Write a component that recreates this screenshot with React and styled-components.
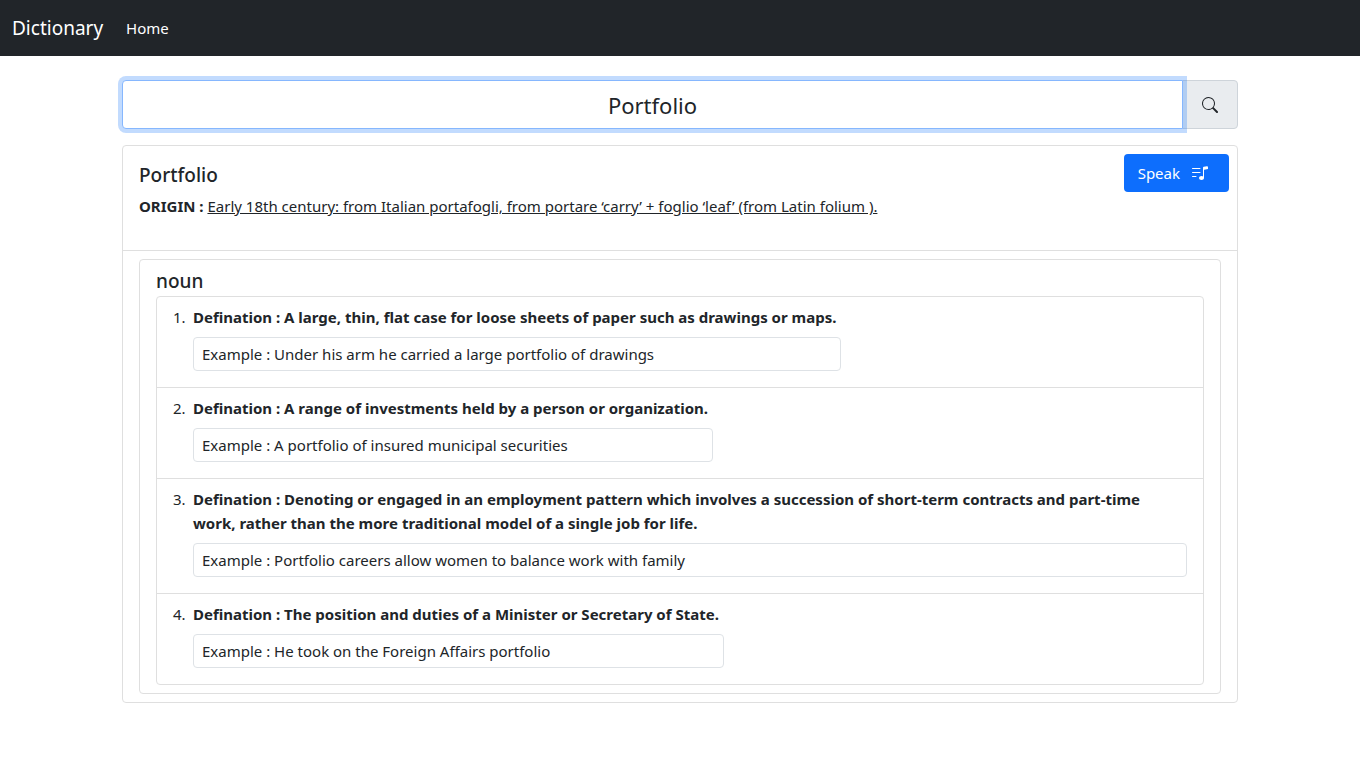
import React, { useState } from "react";
import styled, { createGlobalStyle } from "styled-components";
import { BsSearch, BsMusicNoteList } from "react-icons/bs";

const GlobalStyle = createGlobalStyle`
  *, *::before, *::after { box-sizing: border-box; }
  body {
    margin: 0;
    background: #fff;
    color: #212529;
    font-family: "Segoe UI", "Noto Sans", "Open Sans", sans-serif;
    font-size: 15px;
    line-height: 24px;
  }
`;

const Navbar = styled.nav`
  display: flex;
  align-items: center;
  gap: 23px;
  height: 56px;
  padding: 0 12px;
  background: #212529;
`;

const NavLink = styled.a`
  color: #fff;
  text-decoration: none;
  font-size: ${(p) => (p.$brand ? "19px" : "15px")};
`;

const Container = styled.main`
  max-width: 1140px;
  margin: 0 auto;
  padding: 24px 12px;
`;

const SearchForm = styled.form`
  display: flex;
  height: 49px;
  margin-bottom: 16px;
`;

const SearchInput = styled.input`
  flex: 1;
  min-width: 0;
  position: relative;
  z-index: 1;
  padding: 8px 16px;
  border: 1px solid #86b7fe;
  border-radius: 4px 0 0 4px;
  outline: 0;
  box-shadow: 0 0 0 4px rgba(13, 110, 253, 0.25);
  background: #fff;
  color: #212529;
  font: inherit;
  font-size: 22px;
  text-align: center;
`;

const SearchButton = styled.button`
  display: flex;
  align-items: center;
  justify-content: center;
  width: 56px;
  margin-left: -1px;
  padding: 0;
  border: 1px solid #ced4da;
  border-radius: 0 4px 4px 0;
  background: #e9ecef;
  color: #212529;
  cursor: pointer;
`;

const Card = styled.section`
  border: 1px solid #dfdfdf;
  border-radius: 4px;
`;

const CardHeader = styled.header`
  display: flex;
  justify-content: space-between;
  align-items: flex-start;
  gap: 16px;
  padding: 8px 8px 32px 16px;
  border-bottom: 1px solid #dfdfdf;
`;

const WordInfo = styled.div`
  padding-top: 8px;
`;

const Word = styled.h1`
  margin: 0 0 6px;
  font-size: 19px;
  font-weight: 500;
  line-height: 26px;
`;

const Origin = styled.p`
  margin: 0;
`;

const SpeakButton = styled.button`
  display: flex;
  align-items: center;
  gap: 12px;
  height: 38px;
  padding: 0 21px 0 14px;
  border: 0;
  border-radius: 4px;
  background: #0d6efd;
  color: #fff;
  font: inherit;
  cursor: pointer;
`;

const CardBody = styled.div`
  padding: 8px 16px;
`;

const MeaningCard = styled(Card)`
  padding: 8px 16px;
`;

const PartOfSpeech = styled.h2`
  margin: 0 0 2px;
  font-size: 19px;
  font-weight: 500;
  line-height: 26px;
`;

const Definitions = styled.ol`
  margin: 0;
  padding: 0;
  border: 1px solid #dfdfdf;
  border-radius: 4px;
  list-style: none;
  counter-reset: definition;
`;

const DefinitionItem = styled.li`
  display: flex;
  padding: 8px 16px 16px;
  counter-increment: definition;

  &::before {
    content: counter(definition) ".";
    flex: 0 0 20px;
  }

  & + & {
    border-top: 1px solid #dfdfdf;
  }
`;

const DefinitionText = styled.div`
  padding-right: 5px;
  font-weight: 700;
`;

const Example = styled.div`
  margin-top: 8px;
  padding: 4px 8px;
  border: 1px solid #dee2e6;
  border-radius: 4px;
`;

const entry = {
  word: "Portfolio",
  origin:
    "Early 18th century: from Italian portafogli, from portare ‘carry’ + foglio ‘leaf’ (from Latin folium ).",
  partOfSpeech: "noun",
  definitions: [
    {
      text: "A large, thin, flat case for loose sheets of paper such as drawings or maps.",
      example: "Under his arm he carried a large portfolio of drawings",
    },
    {
      text: "A range of investments held by a person or organization.",
      example: "A portfolio of insured municipal securities",
    },
    {
      text: "Denoting or engaged in an employment pattern which involves a succession of short-term contracts and part-time work, rather than the more traditional model of a single job for life.",
      example: "Portfolio careers allow women to balance work with family",
    },
    {
      text: "The position and duties of a Minister or Secretary of State.",
      example: "He took on the Foreign Affairs portfolio",
    },
  ],
};

export default function App() {
  const [query, setQuery] = useState(entry.word);

  return (
    <>
      <GlobalStyle />
      <Navbar>
        <NavLink href="#" $brand>Dictionary</NavLink>
        <NavLink href="#home">Home</NavLink>
      </Navbar>
      <Container>
        <SearchForm onSubmit={(e) => e.preventDefault()}>
          <SearchInput
            type="text"
            aria-label="Search word"
            value={query}
            onChange={(e) => setQuery(e.target.value)}
          />
          <SearchButton type="submit" aria-label="Search">
            <BsSearch size={16} />
          </SearchButton>
        </SearchForm>
        <Card>
          <CardHeader>
            <WordInfo>
              <Word>{entry.word}</Word>
              <Origin>
                <b>ORIGIN :</b> <u>{entry.origin}</u>
              </Origin>
            </WordInfo>
            <SpeakButton type="button">
              Speak <BsMusicNoteList size={16} />
            </SpeakButton>
          </CardHeader>
          <CardBody>
            <MeaningCard>
              <PartOfSpeech>{entry.partOfSpeech}</PartOfSpeech>
              <Definitions>
                {entry.definitions.map((d) => (
                  <DefinitionItem key={d.text}>
                    <div>
                      <DefinitionText>{`Defination : ${d.text}`}</DefinitionText>
                      <Example>{`Example : ${d.example}`}</Example>
                    </div>
                  </DefinitionItem>
                ))}
              </Definitions>
            </MeaningCard>
          </CardBody>
        </Card>
      </Container>
    </>
  );
}
